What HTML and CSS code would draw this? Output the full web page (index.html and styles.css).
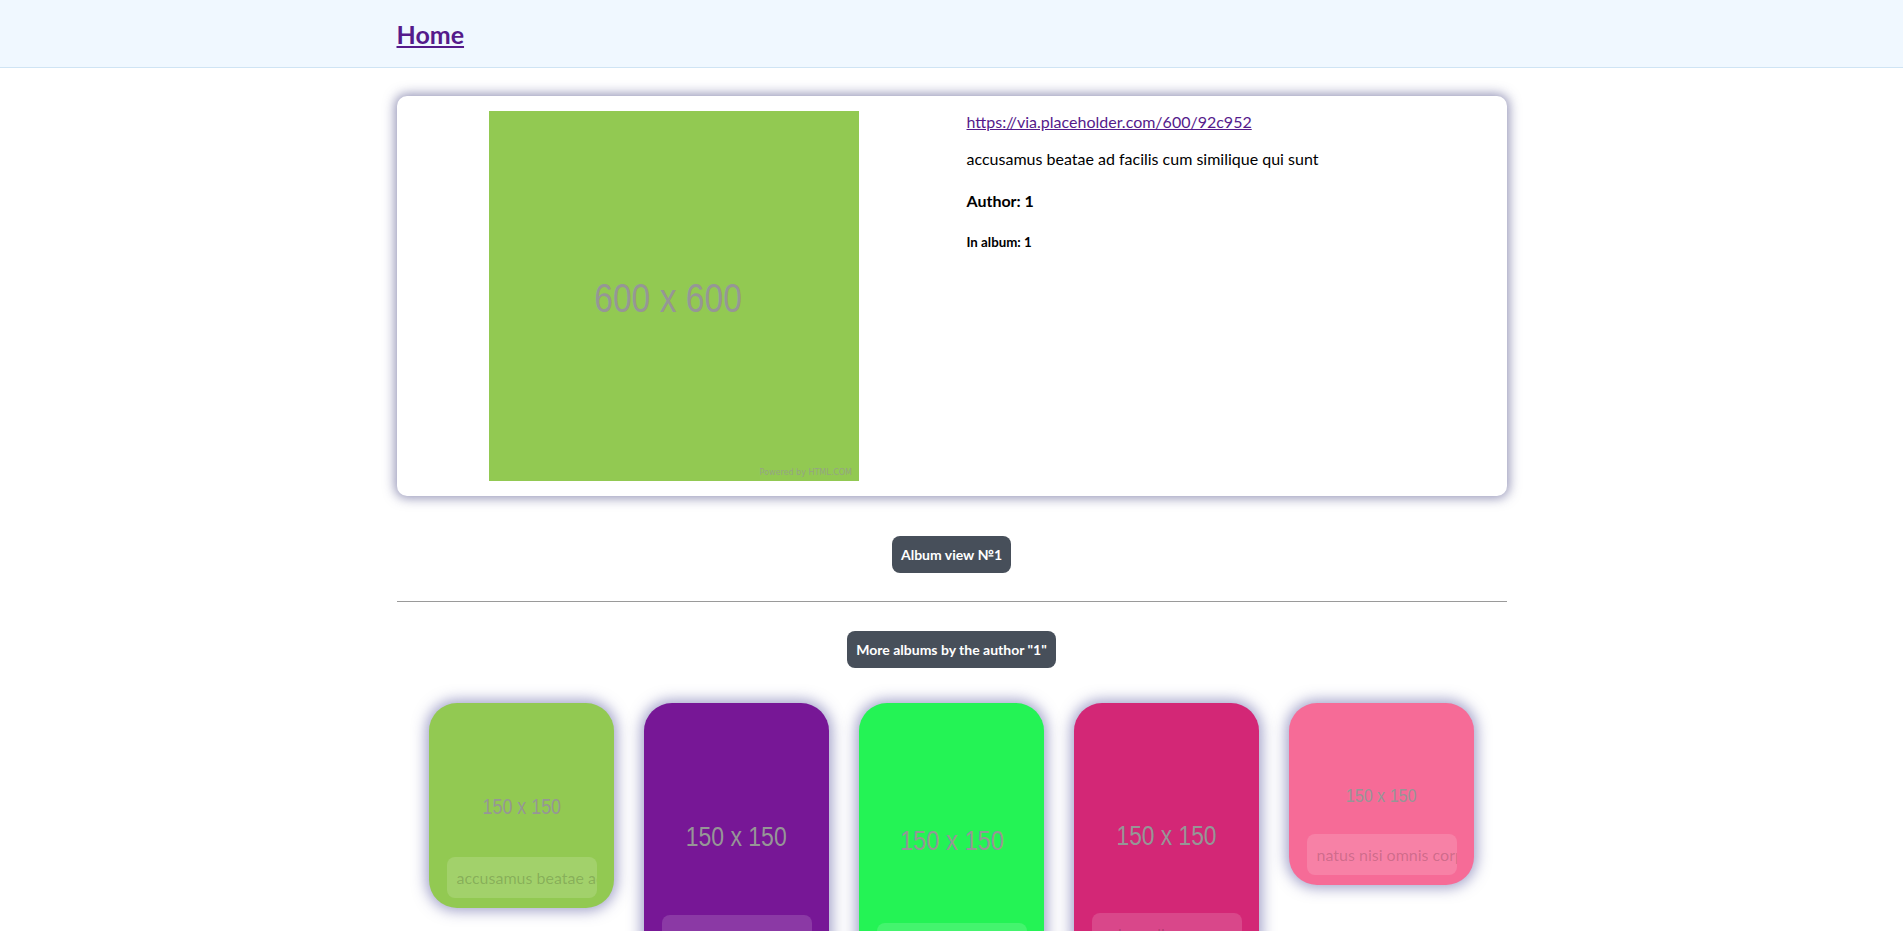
FILE: index.html
```html
<!DOCTYPE html>
<html lang="en">
<head>
<meta charset="utf-8">
<title>Photo</title>
<link rel="stylesheet" href="styles.css">
</head>
<body>
<header class="site-header">
  <div class="container header-inner">
    <a class="home-link" href="#">Home</a>
  </div>
</header>
<main class="container main">
  <section class="photo-card">
    <div class="col col-image">
      <div class="big-placeholder">
        <span class="big-label">600 x 600</span>
        <span class="powered">Powered by HTML.COM</span>
      </div>
    </div>
    <div class="col col-info">
      <p class="info-p"><a class="visited-link" href="#">https://via.placeholder.com/600/92c952</a></p>
      <p class="info-p">accusamus beatae ad facilis cum similique qui sunt</p>
      <h4 class="author">Author: 1</h4>
      <h5 class="album">In album: 1</h5>
    </div>
  </section>

  <div class="btn-row first-btn-row">
    <span class="dark-btn">Album view №1</span>
  </div>
  <hr class="divider">
  <div class="btn-row second-btn-row">
    <span class="dark-btn">More albums by the author "1"</span>
  </div>

  <div class="albums">
    <div class="album-card" style="height:205px;background-color:#92c952">
      <span class="thumb-label" style="font-size:21.3px">150 x 150</span>
      <span class="caption">accusamus beatae ad facilis cum similique qui sunt</span>
    </div>
    <div class="album-card" style="height:263px;background-color:#771796">
      <span class="thumb-label" style="font-size:27.4px">150 x 150</span>
      <span class="caption">reprehenderit est deserunt velit ipsam</span>
    </div>
    <div class="album-card" style="height:271px;background-color:#24f355">
      <span class="thumb-label" style="font-size:28.2px">150 x 150</span>
      <span class="caption">officia porro iure quia iusto qui ipsa ut modi</span>
    </div>
    <div class="album-card" style="height:261px;background-color:#d32776">
      <span class="thumb-label" style="font-size:27.1px">150 x 150</span>
      <span class="caption">culpa odio esse rerum omnis laboriosam voluptate repudiandae</span>
    </div>
    <div class="album-card" style="height:182px;background-color:#f66b97">
      <span class="thumb-label" style="font-size:19.2px">150 x 150</span>
      <span class="caption">natus nisi omnis corporis facere molestiae rerum in</span>
    </div>
  </div>
</main>
</body>
</html>
```

FILE: styles.css
```css
html {
  overflow: hidden;
}

body {
  margin: 0;
  font-family: "Lato", "Open Sans", sans-serif;
  font-size: 16px;
  color: #000;
  background: #fff;
}

.container {
  width: 1110px;
  margin: 0 auto;
}

.site-header {
  background: #f0f8ff;
  border-bottom: 1px solid #cfe4f4;
  height: 67px;
}

.header-inner {
  height: 100%;
  display: flex;
  align-items: center;
}

.home-link {
  font-size: 25px;
  font-weight: 700;
  color: #551a8b;
  text-decoration: underline;
  line-height: 32px;
}

.main {
  padding-top: 28px;
}

.photo-card {
  display: flex;
  background: #fff;
  border-radius: 10px;
  box-shadow: 0 0 12px 2px rgba(55, 55, 120, 0.55);
  padding: 15px 0;
}

.col {
  flex: 1 1 0;
  padding: 0 15px;
  min-width: 0;
}

.col-image {
  display: flex;
  justify-content: center;
}

.big-placeholder {
  position: relative;
  width: 370px;
  height: 370px;
  background: #92c952;
  display: flex;
  align-items: center;
  justify-content: center;
}

.big-label {
  font-family: "Liberation Sans", Arial, sans-serif;
  font-size: 41px;
  color: #969696;
  transform: translate(-6px, 2px) scaleX(0.82);
}

.powered {
  position: absolute;
  right: 7px;
  bottom: 4px;
  font-family: "DejaVu Sans", sans-serif;
  font-size: 8px;
  color: rgba(150, 150, 150, 0.75);
}

.info-p {
  margin: 0 0 16px;
  line-height: 21px;
}

.visited-link {
  color: #551a8b;
  text-decoration: underline;
}

.author {
  font-size: 16px;
  font-weight: 700;
  margin: 21px 0;
  line-height: 21px;
}

.album {
  font-size: 13.3px;
  font-weight: 700;
  margin: 22px 0;
  line-height: 18px;
}

.btn-row {
  display: flex;
  justify-content: center;
}

.first-btn-row {
  margin-top: 40px;
}

.second-btn-row {
  margin-top: 29px;
}

.dark-btn {
  display: inline-block;
  background: #474f5a;
  color: #fff;
  font-weight: 700;
  font-size: 14px;
  line-height: 21px;
  padding: 8px 9px;
  border-radius: 8px;
}

.divider {
  margin: 28px 0 0;
  border: 0;
  border-top: 1px solid #9a9a9a;
  height: 0;
}

.albums {
  display: flex;
  justify-content: center;
  align-items: flex-start;
  gap: 30px;
  margin-top: 35px;
}

.album-card {
  width: 185px;
  flex: 0 0 185px;
  display: grid;
  border-radius: 28px;
  box-shadow: 0 0 14px 3px rgba(70, 70, 150, 0.5);
  overflow: hidden;
}

.thumb-label {
  grid-area: 1 / 1;
  align-self: center;
  justify-self: center;
  font-family: "Liberation Sans", Arial, sans-serif;
  color: #969696;
  transform: translateY(2px) scaleX(0.84);
  white-space: nowrap;
}

.caption {
  grid-area: 1 / 1;
  align-self: end;
  justify-self: center;
  box-sizing: border-box;
  width: 150px;
  height: 41px;
  margin-bottom: 10px;
  padding: 0 10px;
  background: rgba(255, 255, 255, 0.15);
  border-radius: 8px;
  line-height: 41px;
  white-space: nowrap;
  overflow: hidden;
  color: rgba(0, 0, 0, 0.18);
  font-size: 16px;
}
```
